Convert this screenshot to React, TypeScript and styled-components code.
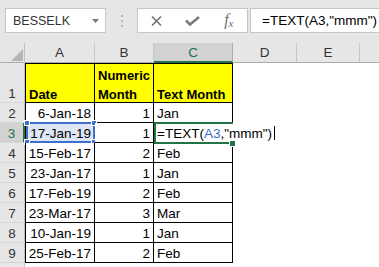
import React from 'react';
import styled, { createGlobalStyle } from 'styled-components';

const GREEN = '#217346';
const BLUE = '#3f6fc6';

const GlobalStyle = createGlobalStyle`
  html, body { margin: 0; padding: 0; background: #fff; }
  body { font-family: "Liberation Sans", Arial, sans-serif; overflow: hidden; }
`;

const Frame = styled.div`
  width: 379px;
  height: 267px;
  overflow: hidden;
  display: flex;
  flex-direction: column;
  background: #fff;
`;

const Toolbar = styled.div`
  height: 43px;
  flex: none;
  box-sizing: border-box;
  background: #e6e6e6;
  display: flex;
  align-items: flex-start;
  padding: 8px 0 0 5px;
`;

const NameBox = styled.div`
  width: 101px;
  height: 25px;
  flex: none;
  box-sizing: border-box;
  background: #fff;
  border: 1px solid #c6c6c6;
  display: flex;
  align-items: center;
  justify-content: space-between;
  padding: 0 6px 0 7px;
  font-size: 12.5px;
  color: #333;
`;

const Grip = styled.div`
  width: 31px;
  height: 25px;
  flex: none;
  display: flex;
  flex-direction: column;
  align-items: center;
  justify-content: center;
  gap: 3px;
  span { width: 2px; height: 2px; background: #b3b3b3; }
`;

const ButtonBox = styled.div`
  width: 111px;
  height: 25px;
  flex: none;
  box-sizing: border-box;
  background: #fff;
  border: 1px solid #c6c6c6;
  display: grid;
  grid-template-columns: repeat(3, 1fr);
`;

const IconSlot = styled.div`
  display: flex;
  align-items: center;
  justify-content: center;
  color: #707070;
`;

const Fx = styled.span`
  font-family: "Liberation Serif", serif;
  font-style: italic;
  font-size: 16px;
  color: #6e6e6e;
  line-height: 1;
  sub { font-size: 11px; vertical-align: -2px; }
`;

const FormulaInput = styled.div`
  flex: 1;
  min-width: 0;
  height: 25px;
  margin-left: 2px;
  box-sizing: border-box;
  background: #fff;
  border: 1px solid #c6c6c6;
  border-right: none;
  display: flex;
  align-items: center;
  padding-left: 11px;
  font-size: 13.5px;
  color: #000;
  white-space: nowrap;
  overflow: hidden;
`;

const Sheet = styled.div`
  display: grid;
  grid-template-columns: 25px 70px 59px 79px 64px 63px 64px;
  grid-template-rows: 20px 40px repeat(9, 20px);
  background: #fff;
  font-size: 13.5px;
  color: #000;
`;

const Corner = styled.div`
  box-sizing: border-box;
  background: #e6e6e6;
  border-right: 1px solid #c0c0c0;
  border-bottom: 1px solid #ababab;
  display: flex;
  align-items: flex-end;
  justify-content: flex-end;
  padding: 0 1px 1px 0;
`;

const ColHeader = styled.div<{ $selected?: boolean }>`
  box-sizing: border-box;
  display: flex;
  align-items: center;
  justify-content: center;
  background: ${p => (p.$selected ? '#d2d2d2' : '#e6e6e6')};
  border-right: 1px solid ${p => (p.$selected ? '#ababab' : '#c6c6c6')};
  border-bottom: ${p => (p.$selected ? `2px solid ${GREEN}` : '1px solid #ababab')};
  color: ${p => (p.$selected ? GREEN : '#333')};
  font-size: 13.5px;
`;

const RowHeader = styled.div<{ $selected?: boolean }>`
  box-sizing: border-box;
  display: flex;
  align-items: flex-end;
  justify-content: center;
  padding-bottom: 1px;
  line-height: 15px;
  background: ${p => (p.$selected ? '#d2d2d2' : '#e6e6e6')};
  border-right: ${p => (p.$selected ? `2px solid ${GREEN}` : '1px solid #c0c0c0')};
  border-bottom: 1px solid #d6d6d6;
  color: ${p => (p.$selected ? GREEN : '#333')};
  font-size: 13.5px;
`;

const Cell = styled.div<{
  $align?: 'left' | 'right';
  $bold?: boolean;
  $fill?: string;
  $top?: boolean;
  $left?: boolean;
  $hideRight?: boolean;
  $front?: boolean;
}>`
  box-sizing: border-box;
  position: relative;
  z-index: ${p => (p.$front ? 3 : 1)};
  display: flex;
  align-items: flex-end;
  justify-content: ${p => (p.$align === 'right' ? 'flex-end' : 'flex-start')};
  padding: 0 3px ${p => (p.$bold ? '0' : '1px')} 3px;
  background: ${p => p.$fill ?? '#fff'};
  border-right: 1px solid ${p => (p.$hideRight ? 'transparent' : '#000')};
  border-bottom: 1px solid #000;
  ${p => (p.$top ? 'border-top: 1px solid #000;' : '')}
  ${p => (p.$left ? 'border-left: 1px solid #000;' : '')}
  font-weight: ${p => (p.$bold ? 700 : 400)};
  font-size: ${p => (p.$bold ? '13px' : '13.5px')};
  line-height: ${p => (p.$bold ? '19px' : '15px')};
  white-space: ${p => (p.$bold ? 'normal' : 'nowrap')};
  overflow: visible;
`;

const HeadText = styled.span`
  margin-bottom: -1.5px;
`;

const Empty = styled.div``;

const EditFrame = styled.div`
  position: absolute;
  left: 0;
  top: -1px;
  right: -1px;
  bottom: -2px;
  border: 2px solid ${GREEN};
  border-right: none;
  pointer-events: none;
`;

const FillHandle = styled.div`
  position: absolute;
  right: -4px;
  bottom: -5px;
  width: 5px;
  height: 5px;
  background: ${GREEN};
  border: 1px solid #fff;
`;

const Ref = styled.span`
  color: ${BLUE};
`;

const Cursor = styled.span`
  display: inline-block;
  width: 1px;
  height: 14px;
  background: #000;
  margin-left: 2px;
  vertical-align: -2px;
`;

const RangeFrame = styled.div`
  position: absolute;
  left: 0;
  top: -1px;
  right: -1px;
  bottom: -1px;
  border: 2px solid ${BLUE};
  pointer-events: none;
`;

const Handle = styled.div<{ $x: 'left' | 'right'; $y: 'top' | 'bottom' }>`
  position: absolute;
  ${p => p.$x}: -4px;
  ${p => p.$y}: -4px;
  width: 4px;
  height: 4px;
  background: ${BLUE};
  border: 1px solid #fff;
`;

const rows = [
  { n: 2, a: '6-Jan-18', b: '1', c: 'Jan' },
  { n: 3, a: '17-Jan-19', b: '1', c: '' },
  { n: 4, a: '15-Feb-17', b: '2', c: 'Feb' },
  { n: 5, a: '23-Jan-17', b: '1', c: 'Jan' },
  { n: 6, a: '17-Feb-19', b: '2', c: 'Feb' },
  { n: 7, a: '23-Mar-17', b: '3', c: 'Mar' },
  { n: 8, a: '10-Jan-19', b: '1', c: 'Jan' },
  { n: 9, a: '25-Feb-17', b: '2', c: 'Feb' },
];

const cols = ['A', 'B', 'C', 'D', 'E', ''];

export default function App() {
  return (
    <>
      <GlobalStyle />
      <Frame>
        <Toolbar>
          <NameBox>
            <span>BESSELK</span>
            <svg width="7" height="4" viewBox="0 0 7 4">
              <polygon points="0,0 7,0 3.5,4" fill="#777" />
            </svg>
          </NameBox>
          <Grip>
            <span />
            <span />
            <span />
          </Grip>
          <ButtonBox>
            <IconSlot>
              <svg width="11" height="10" viewBox="0 0 11 10">
                <path d="M1 0.5 L10 9.5 M10 0.5 L1 9.5" stroke="#6e6e6e" strokeWidth="1.5" fill="none" />
              </svg>
            </IconSlot>
            <IconSlot>
              <svg width="15" height="10" viewBox="0 0 15 10">
                <path d="M1 4.5 L5 8.5 L14 1" stroke="#7a7a7a" strokeWidth="2.6" fill="none" />
              </svg>
            </IconSlot>
            <IconSlot>
              <Fx>
                f<sub>x</sub>
              </Fx>
            </IconSlot>
          </ButtonBox>
          <FormulaInput>=TEXT(A3,"mmm")</FormulaInput>
        </Toolbar>
        <Sheet>
          <Corner>
            <svg width="12" height="12" viewBox="0 0 12 12">
              <polygon points="12,0 12,12 0,12" fill="#b5b5b5" />
            </svg>
          </Corner>
          {cols.map((c, i) => (
            <ColHeader key={i} $selected={c === 'C'}>
              {c}
            </ColHeader>
          ))}

          <RowHeader>1</RowHeader>
          <Cell $bold $top $left $fill="#ffff00">
            <HeadText>Date</HeadText>
          </Cell>
          <Cell $bold $top $fill="#ffff00">
            <HeadText>Numeric Month</HeadText>
          </Cell>
          <Cell $bold $top $fill="#ffff00">
            <HeadText>Text Month</HeadText>
          </Cell>
          <Empty />
          <Empty />
          <Empty />

          {rows.map(r => {
            const sel = r.n === 3;
            return (
              <React.Fragment key={r.n}>
                <RowHeader $selected={sel}>{r.n}</RowHeader>
                <Cell $align="right" $left $fill={sel ? '#dde6f3' : undefined}>
                  {r.a}
                  {sel && (
                    <RangeFrame>
                      <Handle $x="left" $y="top" />
                      <Handle $x="right" $y="top" />
                      <Handle $x="left" $y="bottom" />
                      <Handle $x="right" $y="bottom" />
                    </RangeFrame>
                  )}
                </Cell>
                <Cell $align="right">{r.b}</Cell>
                {sel ? (
                  <Cell $hideRight $front>
                    <span>
                      =TEXT(<Ref>A3</Ref>,"mmm")
                      <Cursor />
                    </span>
                    <EditFrame />
                    <FillHandle />
                  </Cell>
                ) : (
                  <Cell>{r.c}</Cell>
                )}
                <Empty />
                <Empty />
                <Empty />
              </React.Fragment>
            );
          })}

          <RowHeader />
        </Sheet>
      </Frame>
    </>
  );
}
